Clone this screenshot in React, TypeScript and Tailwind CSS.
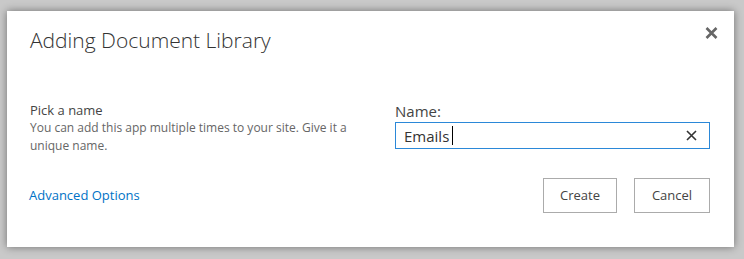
import React from "react";

export default function App() {
  return (
    <div className="w-[744px] h-[259px] bg-[#c9c9c9] pt-[11px] pl-[7px] overflow-hidden" style={{ fontFamily: '"Open Sans", "Noto Sans", sans-serif' }}>
      <div className="w-[727px] h-[236px] bg-white shadow-[0_0_8px_rgba(0,0,0,0.45)] flex flex-col pl-[23px] pr-[24px]">
        <div className="flex justify-between items-start pt-[14px]">
          <h1 className="text-[21px] leading-[30px] font-light text-[#333]">Adding Document Library</h1>
          <button className="mt-[1px] mr-[-8px] text-[#666]">
            <svg width="13" height="14" viewBox="0 0 13 14">
              <path d="M1.5 2 L11.5 12 M11.5 2 L1.5 12" stroke="#666" strokeWidth="2.6" />
            </svg>
          </button>
        </div>
        <div className="flex justify-between mt-[46px]">
          <div className="w-[345px]">
            <div className="text-[13px] leading-[18px] text-[#444]">Pick a name</div>
            <div className="text-[12px] leading-[18px] text-[#666]">You can add this app multiple times to your site. Give it a unique name.</div>
          </div>
          <div className="w-[315px]">
            <div className="text-[15px] leading-[20px] text-[#444]">Name:</div>
            <div className="mt-[1px] h-[27px] border border-[#2b88d8] flex items-center pl-[8px] pr-[12px]">
              <span className="text-[15px] text-[#333] leading-[20px]">Emails</span>
              <span className="ml-[3px] w-px h-[19px] bg-black" />
              <span className="flex-1" />
              <svg width="11" height="11" viewBox="0 0 11 11">
                <path d="M1 1 L10 10 M10 1 L1 10" stroke="#333" strokeWidth="1.6" />
              </svg>
            </div>
          </div>
        </div>
        <div className="flex justify-between items-center mt-[23px]">
          <a className="text-[13px] text-[#0072c6] ml-[-1px]">Advanced Options</a>
          <div className="flex gap-[17px]">
            <button className="w-[74px] h-[35px] border border-[#ababab] text-[13px] text-[#444] bg-white">Create</button>
            <button className="w-[76px] h-[35px] border border-[#ababab] text-[13px] text-[#444] bg-white">Cancel</button>
          </div>
        </div>
      </div>
    </div>
  );
}
